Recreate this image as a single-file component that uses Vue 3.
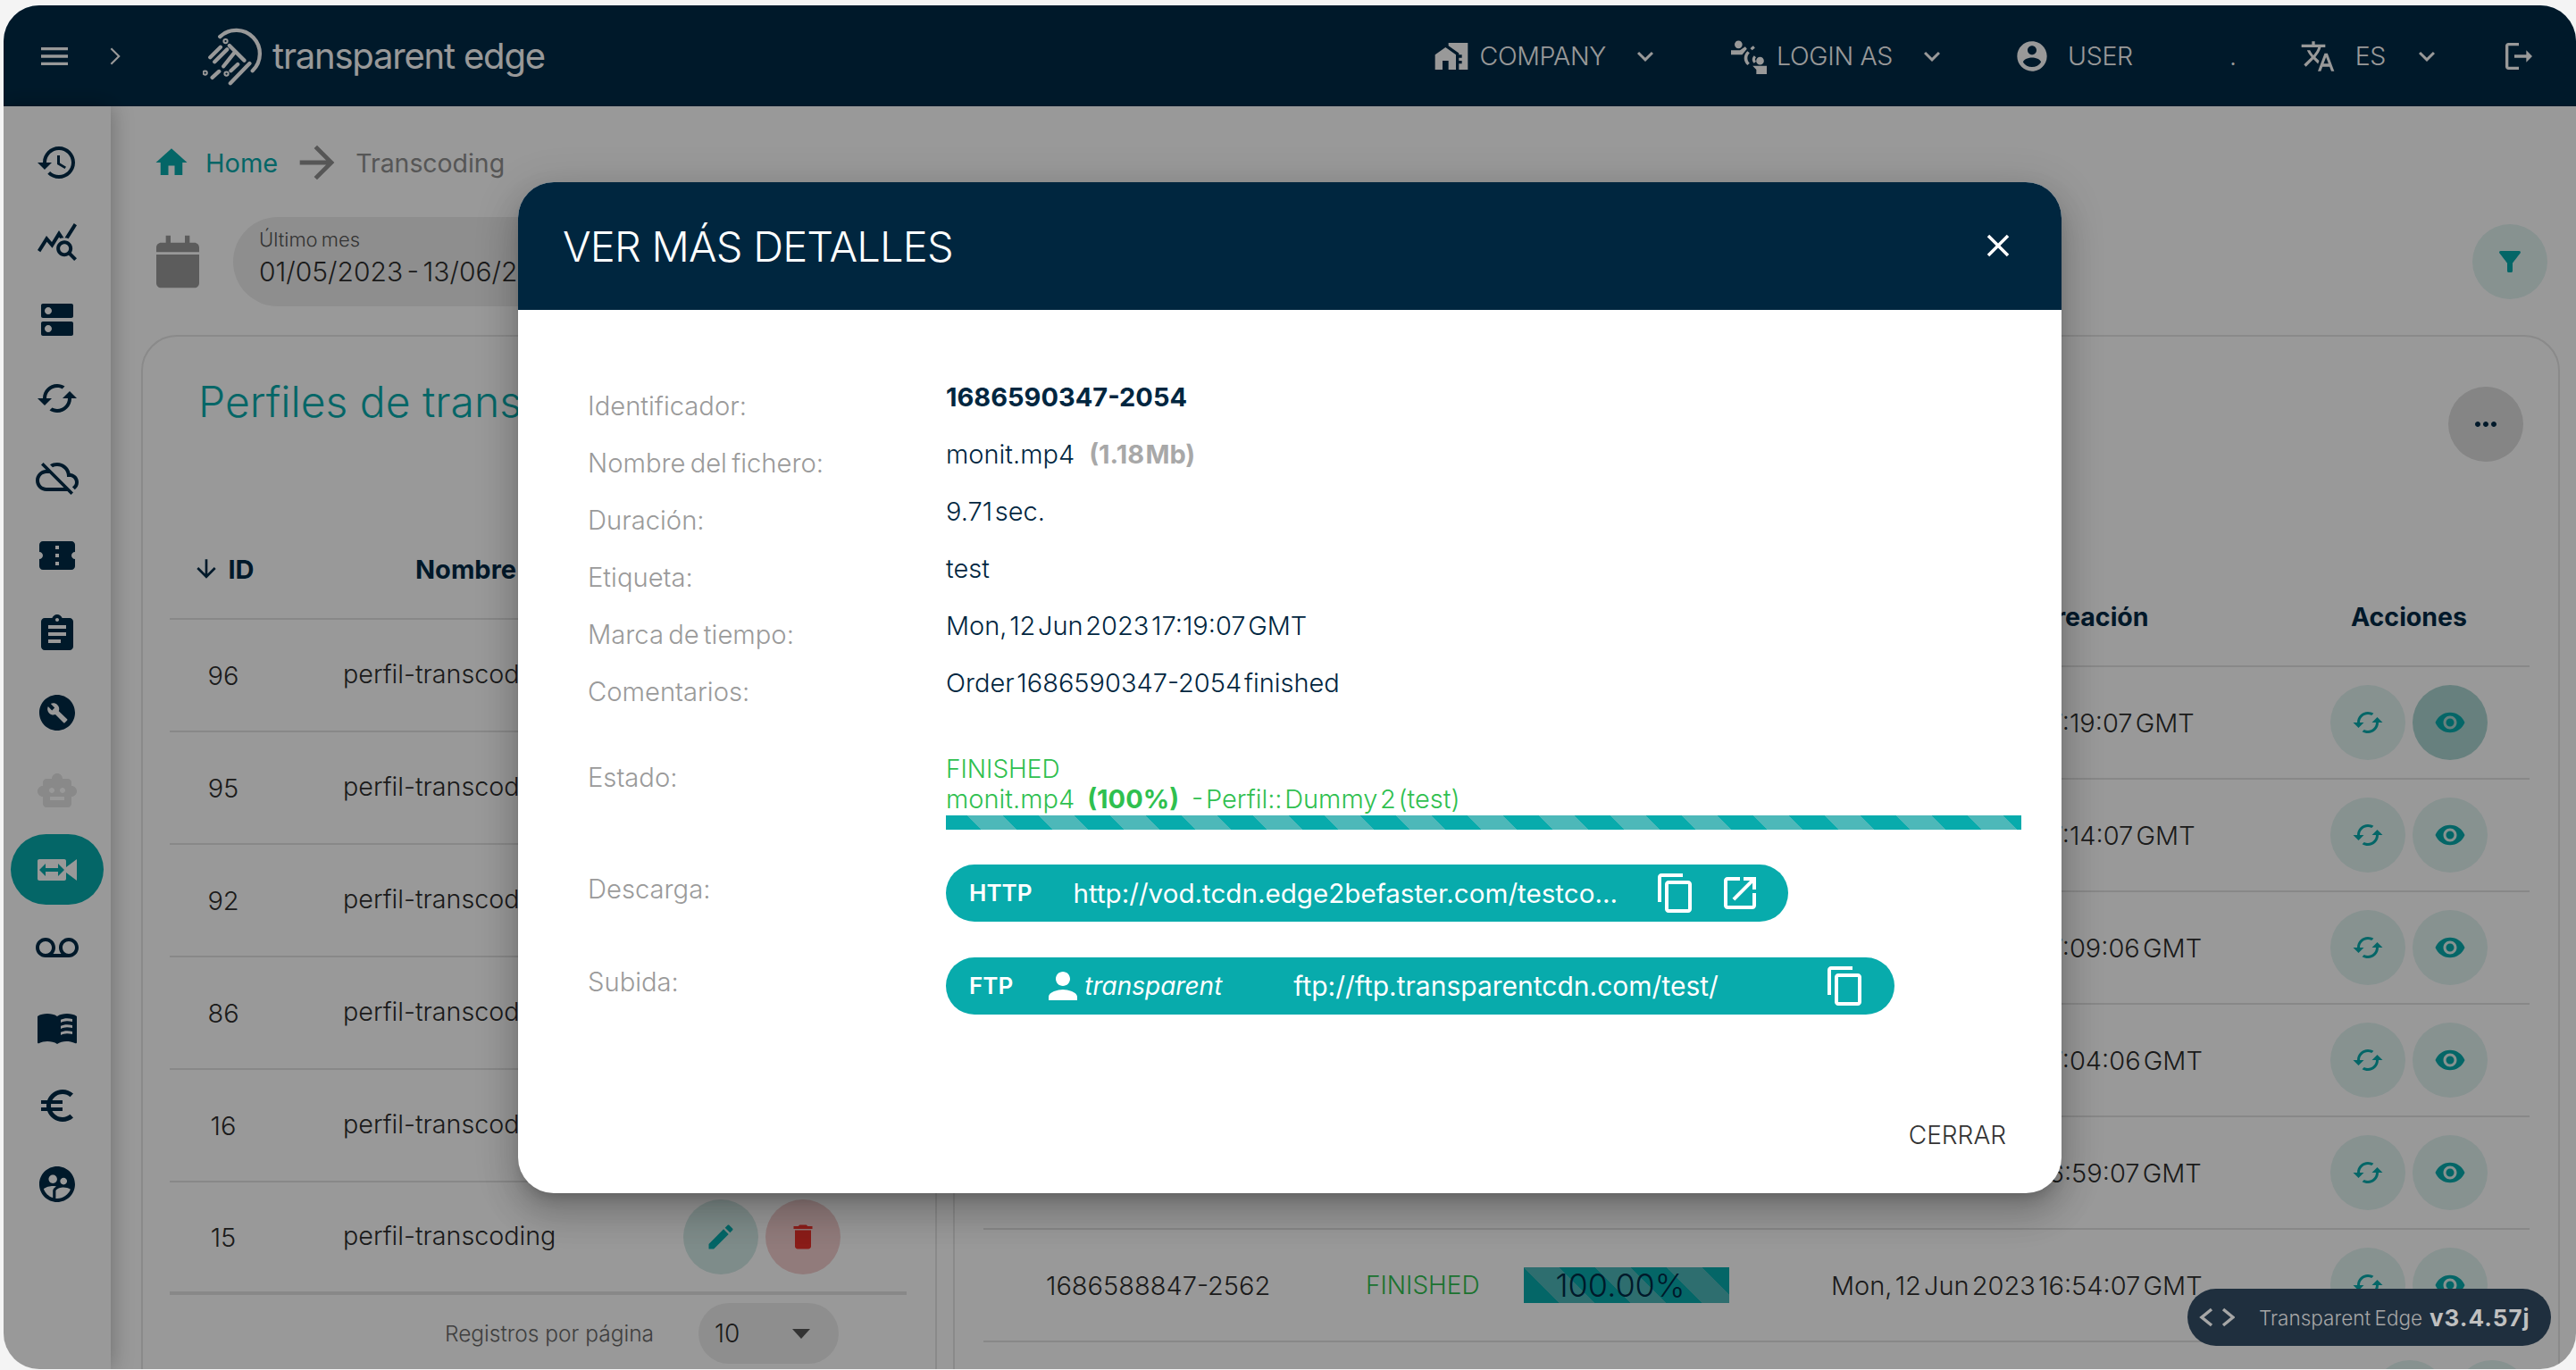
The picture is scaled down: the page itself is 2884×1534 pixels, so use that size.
<script setup>
const icons = {
  history: 'M13 3c-4.97 0-9 4.03-9 9H1l3.89 3.89.07.14L9 12H6c0-3.87 3.13-7 7-7s7 3.13 7 7-3.13 7-7 7c-1.93 0-3.68-.79-4.94-2.06l-1.42 1.42C8.27 19.99 10.51 21 13 21c4.97 0 9-4.03 9-9s-4.03-9-9-9zm-1 5v5l4.28 2.54.72-1.21-3.5-2.08V8H12z',
  stats: 'M19.88 18.47c.44-.7.7-1.51.7-2.39 0-2.49-2.01-4.5-4.5-4.5s-4.5 2.01-4.5 4.5 2.01 4.5 4.49 4.5c.88 0 1.7-.26 2.39-.7L21.58 23 23 21.58l-3.12-3.11zm-3.8.11c-1.38 0-2.5-1.12-2.5-2.5s1.12-2.5 2.5-2.5 2.5 1.12 2.5 2.5-1.12 2.5-2.5 2.5zm-.36-8.5c-.74.02-1.45.18-2.1.45l-.55-.83-3.8 6.18-3.01-3.52-3.63 5.81L1 17l5-8 3 3.5L13 6l2.72 4.08zm2.59.5c-.64-.28-1.33-.45-2.05-.49L21.38 2 23 3.18l-4.69 7.4z',
  dns: 'M20 13H4c-.55 0-1 .45-1 1v6c0 .55.45 1 1 1h16c.55 0 1-.45 1-1v-6c0-.55-.45-1-1-1zM7 19c-1.1 0-2-.9-2-2s.9-2 2-2 2 .9 2 2-.9 2-2 2zM20 3H4c-.55 0-1 .45-1 1v6c0 .55.45 1 1 1h16c.55 0 1-.45 1-1V4c0-.55-.45-1-1-1zM7 9c-1.1 0-2-.9-2-2s.9-2 2-2 2 .9 2 2-.9 2-2 2z',
  cached: 'M19 8l-4 4h3c0 3.31-2.69 6-6 6-1.01 0-1.97-.25-2.8-.7l-1.46 1.46C8.97 19.54 10.43 20 12 20c4.42 0 8-3.58 8-8h3l-4-4zM6 12c0-3.31 2.69-6 6-6 1.01 0 1.97.25 2.8.7l1.46-1.46C15.03 4.46 13.57 4 12 4c-4.42 0-8 3.58-8 8H1l4 4 4-4H6z',
  cloudOff: 'M19.35 10.04C18.67 6.59 15.64 4 12 4c-1.48 0-2.85.43-4.01 1.17l1.46 1.46C10.21 6.23 11.08 6 12 6c3.04 0 5.5 2.46 5.5 5.5v.5H19c1.66 0 3 1.34 3 3 0 1.13-.64 2.11-1.56 2.62l1.45 1.45C23.16 18.16 24 16.68 24 15c0-2.64-2.05-4.78-4.65-4.96zM3 5.27l2.75 2.74C2.56 8.15 0 10.77 0 14c0 3.31 2.69 6 6 6h11.73l2 2L21 20.73 4.27 4 3 5.27zM7.73 10l8 8H6c-2.21 0-4-1.79-4-4s1.79-4 4-4h1.73z',
  ticket: 'M20 12c0-1.1.9-2 2-2V6c0-1.1-.9-2-2-2H4c-1.1 0-1.99.9-1.99 2v4c1.1 0 1.99.9 1.99 2s-.89 2-2 2v4c0 1.1.9 2 2 2h16c1.1 0 2-.9 2-2v-4c-1.1 0-2-.9-2-2zm-7 5.5h-2v-2h2v2zm0-4.5h-2v-2h2v2zm0-4.5h-2v-2h2v2z',
  assignment: 'M19 3h-4.18C14.4 1.84 13.3 1 12 1c-1.3 0-2.4.84-2.82 2H5c-1.1 0-2 .9-2 2v14c0 1.1.9 2 2 2h14c1.1 0 2-.9 2-2V5c0-1.1-.9-2-2-2zm-7 0c.55 0 1 .45 1 1s-.45 1-1 1-1-.45-1-1 .45-1 1-1zm2 14H7v-2h7v2zm3-4H7v-2h10v2zm0-4H7V7h10v2z',
  wrench: 'M12 2C6.48 2 2 6.48 2 12s4.48 10 10 10 10-4.48 10-10S17.52 2 12 2zm5.6 14.3l-1.3 1.3c-.2.2-.5.2-.7 0l-4.6-4.6c-1.2.5-2.5.2-3.5-.8-1-1-1.2-2.5-.6-3.7L9.1 10.7l1.5-1.5-2.2-2.2c1.2-.6 2.7-.4 3.7.6 1 1 1.3 2.3.8 3.5l4.7 4.5c.2.2.2.5 0 .7z',
  robot: 'M20 9V7c0-1.1-.9-2-2-2h-3c0-1.66-1.34-3-3-3S9 3.34 9 5H6c-1.1 0-2 .9-2 2v2c-1.66 0-3 1.34-3 3s1.34 3 3 3v4c0 1.1.9 2 2 2h12c1.1 0 2-.9 2-2v-4c1.66 0 3-1.34 3-3s-1.34-3-3-3zM7.5 11.5c0-.83.67-1.5 1.5-1.5s1.5.67 1.5 1.5S9.83 13 9 13s-1.5-.67-1.5-1.5zM16 17H8v-2h8v2zm-1-4c-.83 0-1.5-.67-1.5-1.5S14.17 10 15 10s1.5.67 1.5 1.5S15.83 13 15 13z',
  transcode: 'M17 10.5V7c0-.55-.45-1-1-1H2c-.55 0-1 .45-1 1v10c0 .55.45 1 1 1h14c.55 0 1-.45 1-1v-3.5l6 4.5V6l-6 4.5zM12.5 15.5V13h-7v2.5L2 12l3.5-3.5V11h7V8.5L16 12l-3.5 3.5z',
  voicemail: 'M18.5 6C15.46 6 13 8.46 13 11.5c0 1.33.47 2.55 1.26 3.5H9.74c.79-.95 1.26-2.17 1.26-3.5C11 8.46 8.54 6 5.5 6S0 8.46 0 11.5 2.46 17 5.5 17h13c3.04 0 5.5-2.46 5.5-5.5S21.54 6 18.5 6zm-13 9C3.57 15 2 13.43 2 11.5S3.57 8 5.5 8 9 9.57 9 11.5 7.43 15 5.5 15zm13 0c-1.93 0-3.5-1.57-3.5-3.5S16.57 8 18.5 8 22 9.57 22 11.5 20.43 15 18.5 15z',
  book: 'M1 6c1.45-1.1 3.55-1.5 5.5-1.5s4.05.4 5.5 1.5v15.5c-1.45-1.1-3.55-1.5-5.5-1.5-1.45 0-3.4.45-4.75 1.1-.1 0-.15.05-.25.05-.25 0-.5-.25-.5-.5V6zM12 6c1.45-1.1 3.55-1.5 5.5-1.5 1.95 0 4.05.4 5.5 1.5v14.65c0 .25-.25.5-.5.5-.1 0-.15 0-.25-.05C20.4 20.3 18.7 20 17.05 20c-1.7 0-3.7.65-5.05 1.5V6zm2 3.5c1-.5 2.3-.9 3.5-.9 1 0 2 .1 3 .4V7.500c-1-.25-2-.4-3-.4-1.3 0-2.5.35-3.5.8v1.600zm0 3.5c1-.5 2.3-.9 3.5-.9 1 0 2 .1 3 .4V11c-1-.25-2-.4-3-.4-1.3 0-2.5.35-3.5.8V13zm0 3.5c1-.5 2.3-.9 3.5-.9 1 0 2 .1 3 .4v-1.5c-1-.25-2-.4-3-.4-1.3 0-2.5.35-3.5.8v1.6z',
  euro: 'M15 18.5c-2.51 0-4.68-1.42-5.76-3.5H15v-2H8.58c-.05-.33-.08-.66-.08-1s.03-.67.08-1H15V9H9.24C10.32 6.92 12.5 5.5 15 5.5c1.61 0 3.09.59 4.23 1.57L21 5.3C19.41 3.87 17.3 3 15 3c-3.92 0-7.24 2.51-8.48 6H3v2h3.06c-.04.33-.06.66-.06 1s.02.67.06 1H3v2h3.52c1.24 3.49 4.56 6 8.48 6 2.31 0 4.41-.87 6-2.3l-1.78-1.77c-1.13.98-2.6 1.57-4.22 1.57z',
  groups: 'M11.99 2c-5.52 0-10 4.48-10 10s4.48 10 10 10 10-4.48 10-10-4.48-10-10-10zm3.61 6.34c1.07 0 1.93.86 1.93 1.93 0 1.07-.86 1.93-1.93 1.93-1.07 0-1.93-.86-1.93-1.93-.01-1.07.86-1.93 1.93-1.93zm-6-1.58c1.3 0 2.36 1.06 2.36 2.36 0 1.3-1.06 2.36-2.36 2.36s-2.36-1.06-2.36-2.36c0-1.31 1.05-2.36 2.36-2.36zm0 9.13v3.75c-2.4-.75-4.3-2.6-5.14-4.96 1.05-1.12 3.67-1.69 5.14-1.69.53 0 1.2.08 1.9.22-1.64.87-1.9 2.02-1.9 2.68zM11.99 20c-.27 0-.53-.01-.79-.04v-4.07c0-1.42 2.94-2.13 4.4-2.13 1.07 0 2.92.39 3.84 1.15-1.17 2.97-4.06 5.09-7.45 5.09z',
  menu: 'M3 18h18v-2H3v2zm0-5h18v-2H3v2zm0-7v2h18V6H3z',
  right: 'M9.4 5.6L8.4 6.6 13.8 12l-5.4 5.4 1 1L15.8 12z',
  down: 'M7.41 8.59L12 13.17l4.59-4.58L18 10l-6 6-6-6z',
  close: 'M19 6.41L17.59 5 12 10.59 6.41 5 5 6.41 10.59 12 5 17.59 6.41 19 12 13.41 17.59 19 19 17.59 13.41 12z',
  home: 'M10 20v-6h4v6h5v-8h3L12 3 2 12h3v8z',
  arrow: 'M12 4l-1.41 1.41L16.17 11H4v2h12.17l-5.58 5.59L12 20l8-8z',
  calendar: 'M3 9h18v12c0 1.1-.9 2-2 2H5c-1.1 0-2-.9-2-2V9zM7 1h2v3h6V1h2v3h2c1.1 0 2 .9 2 2v2H3V6c0-1.1.9-2 2-2h2V1z',
  filter: 'M4.25 5.61C6.27 8.2 10 13 10 13v6c0 .55.45 1 1 1h2c.55 0 1-.45 1-1v-6s3.72-4.8 5.74-7.39c.51-.66.04-1.61-.79-1.61H5.04c-.83 0-1.3.95-.79 1.61z',
  more: 'M6 10c-1.1 0-2 .9-2 2s.9 2 2 2 2-.9 2-2-.9-2-2-2zm12 0c-1.1 0-2 .9-2 2s.9 2 2 2 2-.9 2-2-.9-2-2-2zm-6 0c-1.1 0-2 .9-2 2s.9 2 2 2 2-.9 2-2-.9-2-2-2z',
  sortDown: 'M20 12l-1.41-1.41L13 16.17V4h-2v12.17l-5.58-5.59L4 12l8 8 8-8z',
  edit: 'M3 17.25V21h3.75L17.81 9.94l-3.75-3.75L3 17.25zM20.71 7.04c.39-.39.39-1.02 0-1.41l-2.34-2.34c-.39-.39-1.02-.39-1.41 0l-1.83 1.83 3.75 3.75 1.83-1.83z',
  trash: 'M6 19c0 1.1.9 2 2 2h8c1.1 0 2-.9 2-2V7H6v12zM19 4h-3.5l-1-1h-5l-1 1H5v2h14V4z',
  eye: 'M12 4.5C7 4.5 2.73 7.61 1 12c1.73 4.39 6 7.5 11 7.5s9.27-3.11 11-7.5c-1.73-4.39-6-7.5-11-7.5zM12 17c-2.76 0-5-2.24-5-5s2.24-5 5-5 5 2.24 5 5-2.24 5-5 5zm0-8c-1.66 0-3 1.34-3 3s1.34 3 3 3 3-1.34 3-3-1.34-3-3-3z',
  copy: 'M16 1H4c-1.1 0-2 .9-2 2v14h2V3h12V1zm3 4H8c-1.1 0-2 .9-2 2v14c0 1.1.9 2 2 2h11c1.1 0 2-.9 2-2V7c0-1.1-.9-2-2-2zm0 16H8V7h11v14z',
  open: 'M19 19H5V5h7V3H5c-1.11 0-2 .9-2 2v14c0 1.1.89 2 2 2h14c1.1 0 2-.9 2-2v-7h-2v7zM14 3v2h3.59l-9.83 9.83 1.41 1.41L19 6.41V10h2V3h-7z',
  person: 'M12 12c2.21 0 4-1.79 4-4s-1.79-4-4-4-4 1.79-4 4 1.79 4 4 4zm0 2c-2.67 0-8 1.34-8 4v2h16v-2c0-2.66-5.33-4-8-4z',
  account: 'M12 2C6.48 2 2 6.48 2 12s4.48 10 10 10 10-4.48 10-10S17.52 2 12 2zm0 3c1.66 0 3 1.34 3 3s-1.34 3-3 3-3-1.34-3-3 1.34-3 3-3zm0 14.2c-2.5 0-4.71-1.28-6-3.22.03-1.99 4-3.08 6-3.08 1.99 0 5.97 1.09 6 3.08-1.29 1.94-3.5 3.22-6 3.22z',
  translate: 'M12.87 15.07l-2.54-2.51.03-.03c1.74-1.94 2.98-4.17 3.71-6.53H17V4h-7V2H8v2H1v1.99h11.17C11.5 7.92 10.44 9.75 9 11.35 8.07 10.32 7.3 9.19 6.69 8h-2c.73 1.63 1.73 3.17 2.98 4.56l-5.09 5.02L4 19l5-5 3.11 3.11.76-2.04zM18.5 10h-2L12 22h2l1.12-3h4.75L21 22h2l-4.5-12zm-2.62 7l1.62-4.33L19.12 17h-3.24z',
  logout: 'M5 5h7V3H5c-1.1 0-2 .9-2 2v14c0 1.1.9 2 2 2h7v-2H5V5zm16 7l-4-4v3H9v2h8v3l4-4z',
  company: 'M1 11v10h5v-6h4v6h5V11L8 6zM10 3v1.97l7 5V11h2v2h-2v2h2v2h-2v4h6V3H10z',
  loginAs: 'M5 1.5a2.6 2.6 0 1 1 0 5.2 2.6 2.6 0 0 1 0-5.2zM0 8h6l3.5-2.5 1.2 1.6L7.5 11H0zM11 8.5l1.5 1.3c-2 2.2-2 4.8 0 6.9L11 18c-2.9-3-2.9-6.6 0-9.5zM15 5l1.1 1.5c-.7.4-1.3.9-1.9 1.5l-1.3-1.2c.6-.7 1.3-1.3 2.1-1.8zM15.5 11.5l1.3 1.3c-.8.8-.8 1.8 0 2.6l-1.3 1.3c-1.6-1.6-1.6-3.6 0-5.2zM19.5 12.5a2.6 2.6 0 1 1 0 5.2 2.6 2.6 0 0 1 0-5.2zM14.5 18.5H24V24h-7v-3z'
}

const railItems = [
  { icon: 'history' }, { icon: 'stats' }, { icon: 'dns' }, { icon: 'cached' },
  { icon: 'cloudOff' }, { icon: 'ticket' }, { icon: 'assignment' }, { icon: 'wrench' },
  { icon: 'robot', off: true }, { icon: 'transcode', active: true }, { icon: 'voicemail' },
  { icon: 'book' }, { icon: 'euro' }, { icon: 'groups' }
]

const profiles = [96, 95, 92, 86, 16, 15]

const orders = [
  { id: '1686590347-2054', date: 'Mon, 12 Jun 2023 17:19:07 GMT' },
  { id: '1686590047-2421', date: 'Mon, 12 Jun 2023 17:14:07 GMT' },
  { id: '1686589746-2318', date: 'Mon, 12 Jun 2023 17:09:06 GMT' },
  { id: '1686589446-2207', date: 'Mon, 12 Jun 2023 17:04:06 GMT' },
  { id: '1686589147-2630', date: 'Mon, 12 Jun 2023 16:59:07 GMT' },
  { id: '1686588847-2562', date: 'Mon, 12 Jun 2023 16:54:07 GMT' }
]

const details = [
  { label: 'Identificador:', value: '1686590347-2054', strong: true },
  { label: 'Nombre del fichero:', value: 'monit.mp4', size: '(1.18 Mb)' },
  { label: 'Duración:', value: '9.71 sec.' },
  { label: 'Etiqueta:', value: 'test' },
  { label: 'Marca de tiempo:', value: 'Mon, 12 Jun 2023 17:19:07 GMT' },
  { label: 'Comentarios:', value: 'Order 1686590347-2054 finished' }
]
</script>

<template>
  <div class="page">
    <div class="window">
      <header class="topbar">
        <svg class="ic menu-ic" viewBox="0 0 24 24"><path :d="icons.menu" /></svg>
        <svg class="ic open-ic" viewBox="0 0 24 24"><path :d="icons.right" /></svg>
        <div class="logo">
          <svg class="logo-mark" viewBox="50 32 205 198" fill="none" stroke="#fff" stroke-width="13" stroke-linecap="round">
            <path d="M108 65A79 79 0 1 1 218 180" />
            <path d="M143 222L208 155M140 95L190 145M160 115L120 165M75 135L110 100M90 150L132 108M145 180L168 158M82 203L105 182" />
            <circle cx="127" cy="80" r="3" />
            <circle cx="58" cy="187" r="3" />
            <circle cx="130" cy="190" r="3" />
          </svg>
          <span class="logo-text">transparent edge</span>
        </div>
        <div class="top-nav">
          <div class="nav-item company">
            <svg class="ic nav-ic" viewBox="0 0 24 24"><path :d="icons.company" /></svg>
            <span>COMPANY</span>
            <svg class="ic caret" viewBox="0 0 24 24"><path :d="icons.down" /></svg>
          </div>
          <div class="nav-item login">
            <svg class="ic nav-ic" viewBox="0 0 24 24"><path :d="icons.loginAs" /></svg>
            <span>LOGIN AS</span>
            <svg class="ic caret" viewBox="0 0 24 24"><path :d="icons.down" /></svg>
          </div>
          <div class="nav-item user">
            <svg class="ic nav-ic" viewBox="0 0 24 24"><path :d="icons.account" /></svg>
            <span>USER</span>
            <span class="user-dot">.</span>
          </div>
          <div class="nav-item lang">
            <svg class="ic nav-ic" viewBox="0 0 24 24"><path :d="icons.translate" /></svg>
            <span>ES</span>
            <svg class="ic caret" viewBox="0 0 24 24"><path :d="icons.down" /></svg>
          </div>
          <svg class="ic logout" viewBox="0 0 24 24"><path :d="icons.logout" /></svg>
        </div>
      </header>

      <div class="body">
        <nav class="rail">
          <div v-for="item in railItems" :key="item.icon" class="rail-item" :class="{ active: item.active, off: item.off }">
            <svg class="ic" viewBox="0 0 24 24"><path :d="icons[item.icon]" fill-rule="evenodd" /></svg>
          </div>
        </nav>

        <main class="main">
          <div class="crumbs">
            <svg class="ic home-ic" viewBox="0 0 24 24"><path :d="icons.home" /></svg>
            <span class="crumb-home">Home</span>
            <svg class="ic crumb-arrow" viewBox="0 0 24 24"><path :d="icons.arrow" /></svg>
            <span class="crumb-here">Transcoding</span>
          </div>

          <div class="date-row">
            <svg class="ic cal-ic" viewBox="0 0 24 24"><path :d="icons.calendar" /></svg>
            <div class="date-pill">
              <span class="date-label">Último mes</span>
              <span class="date-value">01/05/2023 - 13/06/2023</span>
            </div>
            <button class="round-btn filter-btn">
              <svg class="ic" viewBox="0 0 24 24"><path :d="icons.filter" /></svg>
            </button>
          </div>

          <section class="card">
            <div class="card-head">
              <h2 class="card-title">Perfiles de transcoding</h2>
              <button class="round-btn more-btn">
                <svg class="ic" viewBox="0 0 24 24"><path :d="icons.more" /></svg>
              </button>
            </div>

            <div class="panels">
              <div class="panel-left">
                <div class="left-head">
                  <span class="head-id">
                    <svg class="ic" viewBox="0 0 24 24"><path :d="icons.sortDown" /></svg>
                    ID
                  </span>
                  <span class="head-name">Nombre</span>
                </div>
                <div v-for="id in profiles" :key="id" class="left-row">
                  <span class="cell-id">{{ id }}</span>
                  <span class="cell-name">perfil-transcoding</span>
                  <div class="actions">
                    <button class="round-btn edit-btn">
                      <svg class="ic" viewBox="0 0 24 24"><path :d="icons.edit" /></svg>
                    </button>
                    <button class="round-btn del-btn">
                      <svg class="ic" viewBox="0 0 24 24"><path :d="icons.trash" /></svg>
                    </button>
                  </div>
                </div>
                <div class="pager">
                  <span class="pager-label">Registros por página</span>
                  <div class="pager-select">
                    <span>10</span>
                    <i class="pager-caret"></i>
                  </div>
                </div>
              </div>

              <div class="panel-right">
                <div class="right-head">
                  <span></span>
                  <span></span>
                  <span></span>
                  <span class="head-date">Fecha de creación</span>
                  <span class="head-actions">Acciones</span>
                </div>
                <div v-for="(order, i) in orders" :key="order.id" class="right-row">
                  <span>{{ order.id }}</span>
                  <span class="cell-status">FINISHED</span>
                  <span class="cell-bar">100.00%</span>
                  <span class="cell-date">{{ order.date }}</span>
                  <div class="actions">
                    <button class="round-btn teal-btn">
                      <svg class="ic" viewBox="0 0 24 24"><path :d="icons.cached" /></svg>
                    </button>
                    <button class="round-btn teal-btn" :class="{ hovered: i === 0 }">
                      <svg class="ic" viewBox="0 0 24 24"><path :d="icons.eye" /></svg>
                    </button>
                  </div>
                </div>
                <!-- next row only peeks in at the bottom of the window -->
                <div class="right-row peek">
                  <div class="actions">
                    <button class="round-btn teal-btn"></button>
                    <button class="round-btn teal-btn"></button>
                  </div>
                </div>
              </div>
            </div>
          </section>
        </main>
      </div>

      <div class="scrim">
        <div class="modal">
          <div class="modal-head">
            <h1 class="modal-title">VER MÁS DETALLES</h1>
            <svg class="ic modal-close" viewBox="0 0 24 24"><path :d="icons.close" /></svg>
          </div>
          <div class="modal-body">
            <div v-for="row in details" :key="row.label" class="info-row">
              <span class="info-label">{{ row.label }}</span>
              <span class="info-value" :class="{ strong: row.strong }">
                {{ row.value }}<b v-if="row.size" class="info-size">{{ row.size }}</b>
              </span>
            </div>

            <div class="status-row">
              <span class="info-label status-label">Estado:</span>
              <div class="status-box">
                <div class="status-line">FINISHED</div>
                <div class="status-line">monit.mp4<b class="status-pct">(100%)</b><span class="status-profile">- Perfil:: Dummy 2 (test)</span></div>
                <div class="stripes"></div>
              </div>
            </div>

            <div class="link-row">
              <span class="info-label link-label">Descarga:</span>
              <div class="chip http-chip">
                <b class="chip-tag">HTTP</b>
                <span class="chip-url http-url">http://vod.tcdn.edge2befaster.com/testco...</span>
                <svg class="ic chip-ic" viewBox="0 0 24 24"><path :d="icons.copy" /></svg>
                <svg class="ic chip-ic open-link" viewBox="0 0 24 24"><path :d="icons.open" /></svg>
              </div>
            </div>

            <div class="link-row">
              <span class="info-label link-label">Subida:</span>
              <div class="chip ftp-chip">
                <b class="chip-tag">FTP</b>
                <svg class="ic person-ic" viewBox="0 0 24 24"><path :d="icons.person" /></svg>
                <i class="chip-user">transparent</i>
                <span class="chip-url ftp-url">ftp://ftp.transparentcdn.com/test/</span>
                <svg class="ic chip-ic" viewBox="0 0 24 24"><path :d="icons.copy" /></svg>
              </div>
            </div>
          </div>
          <div class="modal-foot">CERRAR</div>
        </div>
      </div>

      <div class="version">
        <svg class="version-arrows" viewBox="0 0 40 24" fill="none" stroke="currentColor" stroke-width="3.5">
          <path d="M14 3L3 12l11 9M27 3l11 9-11 9" />
        </svg>
        <span class="version-name">Transparent Edge</span>
        <b class="version-num">v3.4.57j</b>
      </div>
    </div>
  </div>
</template>

<style>
html, body {
  margin: 0;
  background: #fff;
}
</style>

<style scoped>
* {
  box-sizing: border-box;
}

.page {
  width: 2884px;
  height: 1534px;
  padding: 6px 0 1px 4px;
  background: #f4f4f4;
  font-family: Inter, "Open Sans", sans-serif;
  font-weight: 300;
  color: #2d2d2d;
  overflow: hidden;
}

.window {
  position: relative;
  width: 100%;
  height: 100%;
  border-radius: 40px;
  overflow: hidden;
  background: #fff;
  display: flex;
  flex-direction: column;
}

.ic {
  display: block;
  fill: currentColor;
  flex: none;
}

/* top bar */
.topbar {
  height: 113px;
  flex: none;
  display: flex;
  align-items: center;
  background: #002b47;
  color: #fff;
  padding-right: 44px;
}

.menu-ic {
  width: 40px;
  height: 40px;
  margin-left: 37px;
}

.open-ic {
  width: 36px;
  height: 36px;
  margin-left: 30px;
}

.logo {
  display: flex;
  align-items: center;
  margin-left: 80px;
  gap: 10px;
}

.logo-mark {
  width: 68px;
  height: 66px;
}

.logo-text {
  font-size: 40px;
  font-weight: 400;
  letter-spacing: -1.2px;
}

.top-nav {
  margin-left: auto;
  display: flex;
  align-items: center;
  font-size: 28.5px;
  letter-spacing: -0.3px;
}

.nav-item {
  display: flex;
  align-items: center;
}

.nav-ic {
  width: 40px;
  height: 40px;
  margin-right: 11px;
}

.caret {
  width: 36px;
  height: 36px;
  margin-left: 26px;
}

.login {
  margin-left: 78px;
}

.user {
  margin-left: 74px;
}

.user .nav-ic {
  margin-right: 20px;
}

.user-dot {
  margin-left: 108px;
}

.lang {
  margin-left: 71px;
}

.lang .nav-ic {
  margin-right: 22px;
}

.lang .caret {
  margin-left: 28px;
}

.logout {
  width: 40px;
  height: 40px;
  margin-left: 65px;
}

/* layout */
.body {
  flex: 1;
  display: flex;
  min-height: 0;
}

.rail {
  width: 120px;
  flex: none;
  padding: 19px 8px 0;
  background: #fff;
  box-shadow: 0 0 24px rgba(0, 0, 0, 0.3);
  z-index: 1;
  color: #002b47;
}

.rail-item {
  height: 88px;
  display: flex;
  align-items: center;
  justify-content: center;
  border-radius: 40px;
}

.rail-item .ic {
  width: 48px;
  height: 48px;
}

.rail-item.off {
  color: #e4e4e4;
}

.rail-item.active {
  height: 79px;
  margin: 4px 0 5px;
  background: #08abac;
  color: #fff;
}

.main {
  flex: 1;
  min-width: 0;
  padding: 43px 18px 0 34px;
}

.crumbs {
  height: 40px;
  display: flex;
  align-items: center;
  font-size: 29px;
  font-weight: 400;
  padding-left: 13px;
}

.home-ic {
  width: 42px;
  height: 42px;
  color: #08abac;
}

.crumb-home {
  margin-left: 17px;
  color: #08abac;
}

.crumb-arrow {
  width: 58px;
  height: 58px;
  margin-left: 15px;
  color: #8f8f8f;
}

.crumb-here {
  margin-left: 14px;
  font-size: 28.4px;
  color: #8f8f8f;
}

.date-row {
  margin-top: 41px;
  height: 100px;
  display: flex;
  align-items: center;
  padding-left: 9px;
}

.cal-ic {
  width: 64px;
  height: 64px;
  color: #9a9a9a;
}

.date-pill {
  width: 600px;
  height: 100px;
  margin-left: 30px;
  padding: 11px 29px;
  border-radius: 50px;
  background: #ededed;
  display: flex;
  flex-direction: column;
}

.date-label {
  font-size: 22px;
  line-height: 28px;
  color: #555;
  word-spacing: -2px;
}

.date-value {
  font-size: 30px;
  line-height: 44px;
  word-spacing: -4px;
}

.round-btn {
  width: 84px;
  height: 84px;
  flex: none;
  padding: 0;
  border: none;
  border-radius: 50%;
  display: flex;
  align-items: center;
  justify-content: center;
}

.round-btn .ic {
  width: 36px;
  height: 36px;
}

.filter-btn {
  margin-left: auto;
  margin-right: 14px;
  background: #e1f3f1;
  color: #08abac;
}

/* card */
.card {
  margin-top: 32px;
  height: 1300px;
  border: 2px solid #e6e6e6;
  border-radius: 40px;
  padding-top: 56px;
}

.card-head {
  height: 84px;
  display: flex;
  align-items: center;
  padding: 0 39px 0 62px;
}

.card-title {
  margin: 0 0 52px;
  font-size: 48px;
  font-weight: 300;
  color: #08abac;
  white-space: nowrap;
}

.more-btn {
  margin-left: auto;
  background: #dedede;
  color: #002b47;
}

.panels {
  display: flex;
  margin-top: 61px;
  height: 1100px;
}

.panel-left {
  width: 889px;
  flex: none;
  padding: 0 32px 0 30px;
  border-right: 2px solid #e6e6e6;
}

.left-head {
  height: 116px;
  padding-top: 4px;
  display: flex;
  align-items: center;
  border-bottom: 2px solid #e3e3e3;
  font-size: 29px;
  font-weight: 700;
  color: #002b47;
}

.head-id {
  width: 120px;
  display: flex;
  align-items: center;
  justify-content: center;
  gap: 8px;
}

.head-id .ic {
  width: 32px;
  height: 32px;
}

.head-name {
  margin-left: 155px;
}

.left-row {
  height: 126px;
  display: grid;
  grid-template-columns: 120px 455px 176px;
  align-items: center;
  border-bottom: 2px solid #e3e3e3;
  font-size: 29px;
}

.left-row:nth-last-child(2) {
  border-bottom-width: 4px;
}

.cell-id {
  text-align: center;
}

.cell-name {
  margin: 0 0 4px 74px;
  font-size: 28.7px;
}

.actions {
  display: flex;
  gap: 8px;
}

.edit-btn {
  background: #d3e9e6;
  color: #08abac;
}

.del-btn {
  background: #f2cdcd;
  color: #e8312a;
}

.pager {
  margin-top: 9px;
  display: flex;
  align-items: center;
  justify-content: flex-end;
  padding-right: 76px;
  font-size: 24.5px;
}

.pager-label {
  color: #6a6a6a;
}

.pager-select {
  width: 157px;
  height: 68px;
  margin-left: 50px;
  padding: 0 32px 0 18px;
  border-radius: 34px;
  background: #ededed;
  display: flex;
  align-items: center;
  justify-content: space-between;
  font-size: 28px;
}

.pager-caret {
  width: 0;
  height: 0;
  border-left: 10px solid transparent;
  border-right: 10px solid transparent;
  border-top: 11px solid #555;
}

.panel-right {
  flex: 1;
  margin-left: 18px;
  padding: 61px 32px 0 32px;
  border-left: 2px solid #e6e6e6;
}

.right-head,
.right-row {
  display: grid;
  grid-template-columns: 358px 177px 344px 559px 176px;
  padding-left: 70px;
  align-items: center;
  border-bottom: 2px solid #e3e3e3;
  font-size: 29px;
}

.right-head {
  height: 108px;
  padding-bottom: 3px;
  font-weight: 700;
  font-size: 28.5px;
  color: #002b47;
}

.right-row {
  height: 126px;
}

.right-row.peek {
  grid-template-columns: 1fr 176px;
}

.right-row.peek .actions {
  grid-column: 2;
}

.head-date {
  margin-left: 102px;
  white-space: nowrap;
}

.head-actions {
  text-align: center;
}

.cell-status {
  color: #2fc04f;
  font-size: 28px;
}

.cell-bar {
  width: 230px;
  height: 40px;
  padding-right: 14px;
  line-height: 40px;
  text-align: center;
  font-size: 36px;
  color: #002b47;
  background: repeating-linear-gradient(45deg, #08abac 0 28.28px, #4db8b9 28.28px 56.56px);
}

.cell-date {
  font-size: 29px;
  word-spacing: -5px;
}

.teal-btn {
  background: #e1f3f1;
  color: #08abac;
}

.teal-btn.hovered {
  background: #acd6d2;
}

/* dialog */
.scrim {
  position: absolute;
  inset: 0;
  z-index: 2;
  background: rgba(0, 0, 0, 0.4);
  display: flex;
  align-items: center;
  justify-content: center;
}

.modal {
  width: 1728px;
  height: 1132px;
  border-radius: 40px;
  overflow: hidden;
  background: #fff;
  display: flex;
  flex-direction: column;
  box-shadow: 0 11px 15px -7px rgba(0, 0, 0, 0.2), 0 24px 38px 3px rgba(0, 0, 0, 0.14), 0 9px 46px 8px rgba(0, 0, 0, 0.12);
}

.modal-head {
  height: 143px;
  flex: none;
  display: flex;
  align-items: center;
  justify-content: space-between;
  padding: 0 50px;
  background: #00263f;
  color: #fff;
}

.modal-title {
  margin: 0;
  font-size: 47px;
  font-weight: 300;
  letter-spacing: -0.8px;
}

.modal-close {
  width: 42px;
  height: 42px;
}

.modal-body {
  padding: 66px 45px 0 78px;
  font-size: 29px;
  word-spacing: -5.5px;
  color: #00263f;
}

.info-row {
  height: 64px;
  display: flex;
  align-items: center;
}

.info-label {
  width: 401px;
  flex: none;
  font-size: 29.2px;
  word-spacing: -3px;
  color: #9a9a9a;
}

.info-row .info-label {
  margin-top: 20px;
}

.info-value.strong {
  font-weight: 700;
  font-size: 29px;
}

.info-size {
  margin-left: 16px;
  font-weight: 700;
  color: #a8a8a8;
}

.status-row {
  margin-top: 47px;
  margin-bottom: -1px;
  display: flex;
}

.status-label {
  padding-top: 9px;
}

.status-box {
  flex: 1;
  color: #2fc04f;
}

.status-line {
  height: 34.5px;
  line-height: 34.5px;
  white-space: nowrap;
}

.status-line:first-child {
  font-size: 28px;
}

.status-pct {
  margin-left: 14px;
  font-size: 29px;
  font-weight: 700;
}

.status-profile {
  margin-left: 14px;
}

.stripes {
  height: 16px;
  background: repeating-linear-gradient(45deg, #08abac 0 28.28px, #4db8b9 28.28px 56.56px);
}

.link-row {
  margin-top: 40px;
  display: flex;
  align-items: center;
}

.link-label {
  margin-bottom: 8px;
}

.chip {
  height: 64px;
  display: flex;
  align-items: center;
  padding-left: 26px;
  border-radius: 32px;
  background: #08abac;
  color: #fff;
  white-space: nowrap;
  word-spacing: normal;
}

.http-chip {
  width: 943px;
}

.ftp-chip {
  width: 1062px;
}

.chip-tag {
  font-size: 26px;
  font-weight: 600;
}

.chip-url {
  font-weight: 400;
  font-size: 30px;
}

.http-url {
  width: 651px;
  margin-left: 46px;
  font-size: 29.6px;
}

.ftp-url {
  width: 594px;
  margin-left: 80px;
}

.chip-ic {
  width: 48px;
  height: 48px;
}

.open-link {
  margin-left: 24px;
}

.person-ic {
  width: 48px;
  height: 48px;
  margin-left: 32px;
}

.chip-user {
  font-size: 28px;
  font-weight: 400;
}

.modal-foot {
  margin-top: auto;
  padding: 0 62px 48px 0;
  text-align: right;
  font-size: 28px;
  word-spacing: normal;
  color: #333;
}

.version {
  position: absolute;
  right: 28px;
  bottom: 26px;
  z-index: 3;
  width: 407px;
  height: 64px;
  padding: 0 14px 0 13px;
  border-radius: 32px;
  background: #1f2f3e;
  display: flex;
  align-items: center;
  color: #a6a6a6;
  font-size: 22.5px;
  white-space: nowrap;
}

.version-arrows {
  width: 40px;
  height: 24px;
  flex: none;
}

.version-name {
  margin-left: 27px;
  word-spacing: -2px;
}

.version-num {
  margin-left: 8px;
  color: #c0c0c0;
  font-size: 26px;
  font-weight: 700;
  letter-spacing: 1px;
}
</style>
